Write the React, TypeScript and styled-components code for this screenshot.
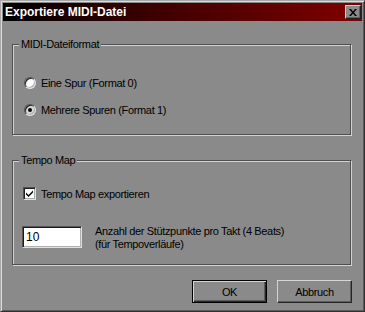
import React from "react";
import styled, { createGlobalStyle } from "styled-components";

const Global = createGlobalStyle`
  html, body { margin: 0; padding: 0; background: #8a8a8a; }
  * { box-sizing: border-box; }
`;

const FACE = "#8a8a8a";

const Window = styled.div`
  width: 365px;
  height: 312px;
  background: ${FACE};
  border-style: solid;
  border-width: 1px;
  border-color: #a8a8a8 #303030 #303030 #a8a8a8;
  box-shadow: inset 1px 1px 0 #dcdcdc, inset -1px -1px 0 #5c5c5c;
  padding: 2px;
  display: flex;
  flex-direction: column;
  font-family: "Liberation Sans", Arial, sans-serif;
  font-size: 11px;
  letter-spacing: -0.35px;
  color: #000;
`;

const TitleBar = styled.div`
  height: 18px;
  display: flex;
  align-items: center;
  padding: 0 1px 0 2px;
  background: linear-gradient(to right, #000000 0%, #3a0000 40%, #800000 100%);
`;

const Title = styled.span`
  color: #fff;
  font-weight: bold;
  font-size: 12px;
  letter-spacing: 0;
  line-height: 18px;
`;

const CloseButton = styled.button`
  margin-left: auto;
  width: 16px;
  height: 14px;
  padding: 0;
  display: flex;
  align-items: center;
  justify-content: center;
  background: ${FACE};
  border-style: solid;
  border-width: 1px;
  border-color: #d0d0d0 #202020 #202020 #d0d0d0;
  box-shadow: inset -1px -1px 0 #5c5c5c;
`;

const Body = styled.div`
  flex: 1;
  display: flex;
  flex-direction: column;
  padding: 23px 11px 0 9px;
`;

const Group = styled.div<{ $h: number; $pt: number; $pl: number; $mt?: number }>`
  position: relative;
  height: ${(p) => p.$h}px;
  margin-top: ${(p) => p.$mt ?? 0}px;
  padding: ${(p) => p.$pt}px 0 0 ${(p) => p.$pl}px;
  border: 1px solid #4e4e4e;
  box-shadow: 1px 1px 0 #d4d4d4, inset 1px 1px 0 #d4d4d4;
  display: flex;
  flex-direction: column;
`;

const GroupLabel = styled.span`
  position: absolute;
  top: -7px;
  left: 6px;
  padding: 0 2px;
  background: ${FACE};
  line-height: 13px;
`;

const Row = styled.label<{ $mt?: number }>`
  display: flex;
  align-items: center;
  height: 13px;
  gap: 5px;
  margin-top: ${(p) => p.$mt ?? 0}px;
  line-height: 13px;
`;

const RowText = styled.span`
  position: relative;
  top: 1px;
`;

const Radio = styled.span<{ $checked?: boolean }>`
  width: 12px;
  height: 12px;
  border-radius: 50%;
  display: flex;
  align-items: center;
  justify-content: center;
  background: ${(p) => (p.$checked ? "#d8d8d8" : "#ffffff")};
  border-style: solid;
  border-width: 1px;
  border-color: #505050 #e0e0e0 #e0e0e0 #505050;
  box-shadow: inset 1px 1px 0 #202020, inset -1px -1px 0 #a8a8a8;
  &::after {
    content: "";
    display: ${(p) => (p.$checked ? "block" : "none")};
    width: 4px;
    height: 4px;
    border-radius: 50%;
    background: #000;
  }
`;

const Checkbox = styled.span`
  width: 13px;
  height: 13px;
  margin-left: 1px;
  display: flex;
  align-items: center;
  justify-content: center;
  background: #ffffff;
  border-style: solid;
  border-width: 1px;
  border-color: #505050 #e0e0e0 #e0e0e0 #505050;
  box-shadow: inset 1px 1px 0 #202020, inset -1px -1px 0 #a8a8a8;
`;

const FieldRow = styled.div`
  display: flex;
  align-items: flex-start;
  gap: 13px;
  margin-top: 26px;
`;

const Input = styled.div`
  width: 60px;
  height: 22px;
  background: #fff;
  border-style: solid;
  border-width: 1px;
  border-color: #555555 #e0e0e0 #e0e0e0 #555555;
  box-shadow: inset 1px 1px 0 #1a1a1a, inset -1px -1px 0 #b0b0b0;
  padding: 0 3px;
  display: flex;
  align-items: center;
  font-size: 12px;
  letter-spacing: 0;
`;

const FieldLabel = styled.div`
  line-height: 13px;
  margin-top: -1px;
`;

const ButtonRow = styled.div`
  display: flex;
  justify-content: flex-end;
  gap: 10px;
  margin-top: 15px;
  margin-right: -1px;
`;

const Button = styled.button<{ $default?: boolean }>`
  width: 75px;
  height: 23px;
  padding: 0;
  font: inherit;
  letter-spacing: -0.35px;
  color: #000;
  background: ${FACE};
  border-style: solid;
  border-width: 1px;
  border-color: ${(p) =>
    p.$default ? "#000" : "#d4d4d4 #262626 #262626 #d4d4d4"};
  box-shadow: ${(p) =>
    p.$default
      ? "inset 1px 1px 0 #d4d4d4, inset -1px -1px 0 #262626, inset -2px -2px 0 #5c5c5c"
      : "inset -1px -1px 0 #5c5c5c"};
`;

export default function App() {
  return (
    <>
      <Global />
      <Window>
        <TitleBar>
          <Title>Exportiere MIDI-Datei</Title>
          <CloseButton aria-label="Schließen">
            <svg width="8" height="7" viewBox="0 0 8 7">
              <path d="M0 0h2l2 2.5L6 0h2L5 3.5 8 7H6L4 4.5 2 7H0l3-3.5z" fill="#000" />
            </svg>
          </CloseButton>
        </TitleBar>
        <Body>
          <Group $h={91} $pt={31} $pl={11}>
            <GroupLabel>MIDI-Dateiformat</GroupLabel>
            <Row>
              <Radio />
              <RowText>Eine Spur (Format 0)</RowText>
            </Row>
            <Row $mt={14}>
              <Radio $checked />
              <RowText>Mehrere Spuren (Format 1)</RowText>
            </Row>
          </Group>
          <Group $h={105} $pt={26} $pl={9} $mt={25}>
            <GroupLabel>Tempo Map</GroupLabel>
            <Row>
              <Checkbox>
                <svg width="7" height="7" viewBox="0 0 7 7">
                  <path d="M0 2.5l2.5 2.5L7 0.5v2L2.5 7 0 4.5z" fill="#000" />
                </svg>
              </Checkbox>
              <RowText>Tempo Map exportieren</RowText>
            </Row>
            <FieldRow>
              <Input>10</Input>
              <FieldLabel>
                Anzahl der Stützpunkte pro Takt (4 Beats)
                <br />
                (für Tempoverläufe)
              </FieldLabel>
            </FieldRow>
          </Group>
          <ButtonRow>
            <Button $default>OK</Button>
            <Button>Abbruch</Button>
          </ButtonRow>
        </Body>
      </Window>
    </>
  );
}
